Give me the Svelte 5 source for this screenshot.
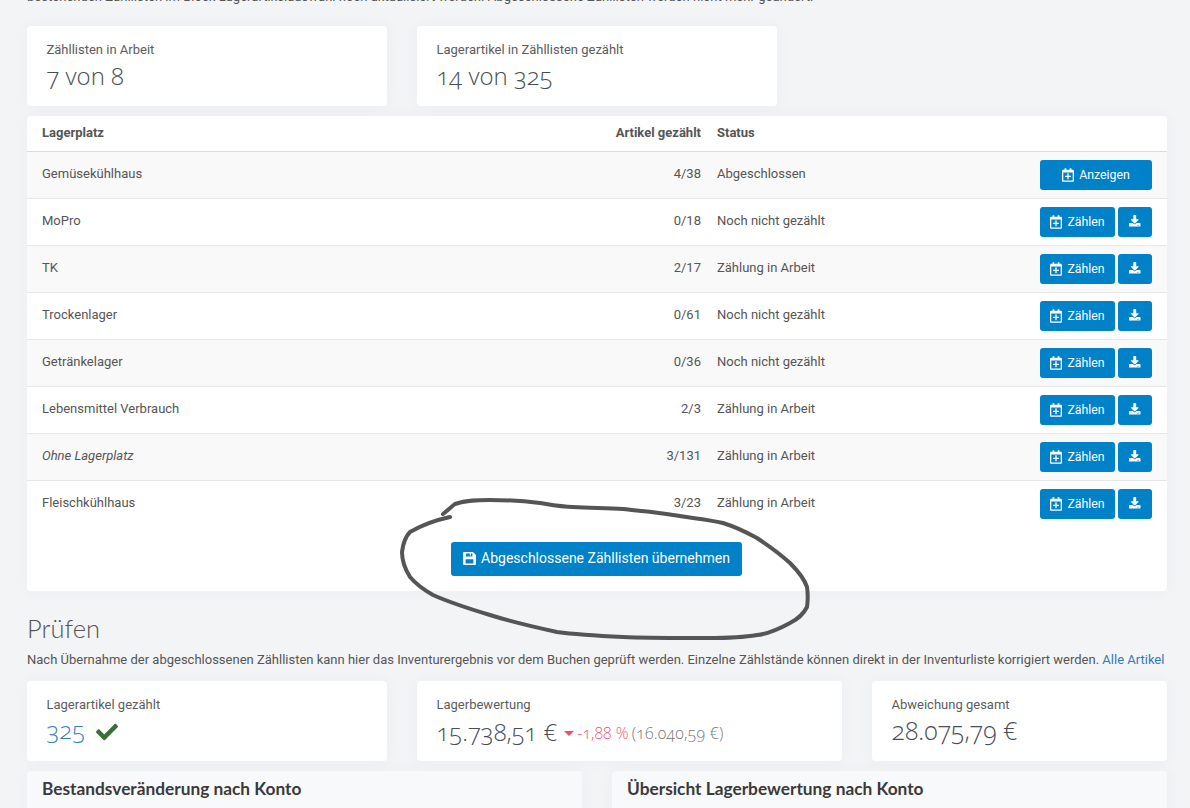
<script>
  const rows = [
    { name: 'Gemüsekühlhaus', count: '4/38', status: 'Abgeschlossen', done: true },
    { name: 'MoPro', count: '0/18', status: 'Noch nicht gezählt' },
    { name: 'TK', count: '2/17', status: 'Zählung in Arbeit' },
    { name: 'Trockenlager', count: '0/61', status: 'Noch nicht gezählt' },
    { name: 'Getränkelager', count: '0/36', status: 'Noch nicht gezählt' },
    { name: 'Lebensmittel Verbrauch', count: '2/3', status: 'Zählung in Arbeit' },
    { name: 'Ohne Lagerplatz', count: '3/131', status: 'Zählung in Arbeit', em: true },
    { name: 'Fleischkühlhaus', count: '3/23', status: 'Zählung in Arbeit' }
  ];
  const cal = 'M336 292v24c0 6.6-5.4 12-12 12h-76v76c0 6.6-5.4 12-12 12h-24c-6.6 0-12-5.4-12-12v-76h-76c-6.6 0-12-5.4-12-12v-24c0-6.6 5.4-12 12-12h76v-76c0-6.6 5.4-12 12-12h24c6.6 0 12 5.4 12 12v76h76c6.6 0 12 5.4 12 12zm112-180v352c0 26.5-21.5 48-48 48H48c-26.5 0-48-21.5-48-48V112c0-26.5 21.5-48 48-48h48V12c0-6.6 5.4-12 12-12h40c6.6 0 12 5.4 12 12v52h128V12c0-6.6 5.4-12 12-12h40c6.6 0 12 5.4 12 12v52h48c26.5 0 48 21.5 48 48zm-48 346V160H48v298c0 3.3 2.7 6 6 6h340c3.3 0 6-2.7 6-6z';
  const dl = 'M216 0h80c13.3 0 24 10.7 24 24v168h87.7c17.8 0 26.7 21.5 14.1 34.1L269.7 378.3c-7.5 7.5-19.8 7.5-27.3 0L90.1 226.1c-12.6-12.6-3.7-34.1 14.1-34.1H192V24c0-13.3 10.7-24 24-24zm296 376v112c0 13.3-10.7 24-24 24H24c-13.3 0-24-10.7-24-24V376c0-13.3 10.7-24 24-24h146.7l49 49c20.1 20.1 52.5 20.1 72.6 0l49-49H488c13.3 0 24 10.7 24 24zm-124 88c0-11-9-20-20-20s-20 9-20 20 9 20 20 20 20-9 20-20zm64 0c0-11-9-20-20-20s-20 9-20 20 9 20 20 20 20-9 20-20z';
  const save = 'M1 0H10L13 3V12a1 1 0 0 1-1 1H1a1 1 0 0 1-1-1V1a1 1 0 0 1 1-1z M3 1.4V4.6H9.4V1.4H8V3.6H6.8V1.4z M2.6 7.2V11.6H10.4V7.2z';
  const check = 'M173.898 439.404l-166.4-166.4c-9.997-9.997-9.997-26.206 0-36.204l36.203-36.204c9.997-9.998 26.207-9.998 36.204 0L192 312.69 432.095 72.596c9.997-9.997 26.207-9.997 36.204 0l36.203 36.204c9.997 9.997 9.997 26.206 0 36.204l-294.4 294.401c-9.998 9.997-26.207 9.997-36.204-.001z';
</script>

<div class="page">
  <p class="intro">bestehenden Zähllisten im Block Lagerartikelauswahl noch aktualisiert werden. Abgeschlossene Zähllisten werden nicht mehr geändert.</p>

  <div class="stats first">
    <div class="stat w360"><div class="label">Zähllisten in Arbeit</div><div class="value">7 von 8</div></div>
    <div class="stat w360"><div class="label">Lagerartikel in Zähllisten gezählt</div><div class="value">14 von 325</div></div>
  </div>

  <section class="card table-card">
    <div class="row head">
      <div class="c-name">Lagerplatz</div>
      <div class="c-count">Artikel gezählt</div>
      <div class="c-status">Status</div>
    </div>
    {#each rows as r, i}
      <div class="row" class:odd={i % 2 === 0}>
        <div class="c-name" class:em={r.em}>{r.name}</div>
        <div class="c-count">{r.count}</div>
        <div class="c-status">{r.status}</div>
        <div class="c-actions">
          {#if r.done}
            <button class="btn wide"><svg class="ic" viewBox="0 0 448 512"><path d={cal} /></svg>Anzeigen</button>
          {:else}
            <button class="btn count"><svg class="ic" viewBox="0 0 448 512"><path d={cal} /></svg>Zählen</button>
            <button class="btn dl"><svg class="ic dlic" viewBox="0 0 512 512"><path d={dl} /></svg></button>
          {/if}
        </div>
      </div>
    {/each}
    <div class="foot">
      <button class="btn big"><svg class="ic sv" viewBox="0 0 13 13"><path fill-rule="evenodd" d={save} /></svg><span class="bigtxt">Abgeschlossene Zähllisten übernehmen</span></button>
    </div>
  </section>

  <h2 class="title">Prüfen</h2>
  <p class="desc">Nach Übernahme der abgeschlossenen Zähllisten kann hier das Inventurergebnis vor dem Buchen geprüft werden. Einzelne Zählstände können direkt in der Inventurliste korrigiert werden. <span class="link">Alle Artikel</span></p>

  <div class="stats">
    <div class="stat w360">
      <div class="label">Lagerartikel gezählt</div>
      <div class="value blue">325<svg class="chk" viewBox="0 0 512 512"><path d={check} /></svg></div>
    </div>
    <div class="stat w425">
      <div class="label">Lagerbewertung</div>
      <div class="value">15.738,51 €<span class="caret"></span><small class="red">-1,88 %</small><small class="prev">(16.040,59 €)</small></div>
    </div>
    <div class="stat grow">
      <div class="label">Abweichung gesamt</div>
      <div class="value wide-val">28.075,79 €</div>
    </div>
  </div>

  <div class="panels">
    <div class="panel">Bestandsveränderung nach Konto</div>
    <div class="panel">Übersicht Lagerbewertung nach Konto</div>
  </div>

  <svg class="scribble" viewBox="0 0 1190 808" aria-hidden="true">
    <path d="M443 514 C447 511 451 507 455 504 C466 500 478 500 490 500 C508 500 524 501 540 503 C552 505 562 507 573 507 C590 508 606 508 623 509 C640 511 656 512 673 515 C690 518 707 519 723 523 C736 527 746 532 757 538 C769 546 780 554 790 563 C798 571 804 578 807 587 C808 594 808 600 807 607 C803 615 798 619 790 623 C779 629 769 634 757 635 C735 639 712 638 690 638 C668 638 645 638 623 637 C601 636 579 635 557 632 C534 627 512 622 490 615 C470 609 451 603 433 595 C424 590 416 584 410 577 C405 569 402 561 402 552 C403 544 405 537 410 532 C422 525 436 520 450 517" />
  </svg>
</div>

<style>
  :global(body) { margin: 0; background: #f3f4f6; overflow: hidden; }
  .page {
    position: relative; width: 1190px; height: 808px; overflow: hidden; box-sizing: border-box;
    padding: 0 23px 0 27px;
    font-family: Roboto, "Liberation Sans", sans-serif; font-size: 13px; color: #555;
  }
  .intro { margin: -11px 0 0; line-height: 15px; height: 15px; white-space: nowrap; letter-spacing: 0.03px; }
  .stats { display: flex; gap: 30px; }
  .stats.first { margin-top: 22px; }
  .stat {
    background: #fff; border-radius: 4px; height: 80px; box-sizing: border-box; padding: 16px 19.5px 0;
    box-shadow: 0 0 16px rgba(60, 70, 90, 0.04);
  }
  .w360 { width: 360px; }
  .w425 { width: 425px; }
  .grow { flex: 1; }
  .label { line-height: 15px; color: #5c5c5c; }
  .value {
    font-family: "Open Sans", Lato, sans-serif; font-weight: 300; font-size: 24px; line-height: 32px;
    font-variant-numeric: oldstyle-nums; font-feature-settings: "onum" 1;
    margin-top: 2px; color: #484e55; white-space: nowrap; display: flex; align-items: center;
  }
  .first .value { margin-top: 3px; }
  .wide-val { font-size: 25px; }
  .value.blue { color: #3a7fc0; }
  .value small { font-size: 16px; margin-top: 3px; white-space: pre; }
  .red { color: #ef5a6f; }
  .prev { color: #777; margin-left: 3px; letter-spacing: 0.2px; }
  .caret {
    width: 0; height: 0; border: 5px solid transparent; border-top: 5.5px solid #ee4e68; border-bottom: 0;
    margin: 3px 3px 0 7px;
  }
  .chk { width: 22px; height: 22px; fill: #3a7038; margin: 4px 0 0 11px; }
  .card { background: #fff; border-radius: 4px; box-shadow: 0 0 16px rgba(60, 70, 90, 0.04); }
  .table-card { margin-top: 10px; height: 475px; display: flex; flex-direction: column; }
  .row {
    display: grid; grid-template-columns: 427px 216px 1fr auto; align-items: center;
    height: 47px; box-sizing: border-box; padding: 0 15px; border-bottom: 1px solid #e6e7e9; column-gap: 16px;
  }
  .row > div { padding-bottom: 4px; }
  .row.odd { background: #f9f9f9; }
  .row:nth-child(9) { border-bottom-color: transparent; }
  .row.head { height: 36px; font-weight: 700; border-bottom: 1px solid #dcdddf; font-size: 13px; }
  .row.head > div { padding-bottom: 2px; }
  .c-name { grid-column: 1; }
  .c-count { text-align: right; margin-left: 0; }
  .row > .c-actions { display: flex; gap: 3px; padding: 0; }
  .em { font-style: italic; }
  .btn {
    display: inline-flex; align-items: center; justify-content: center; border: 0; border-radius: 3px;
    background: #0081c8; color: #fff; font: 400 12.3px Roboto, sans-serif; height: 30px; padding: 0;
  }
  .wide { width: 112px; }
  .count { width: 75px; }
  .dl { width: 34px; }
  .ic { width: 12px; height: 14px; fill: #fff; margin-right: 5px; flex: none; }
  .dlic { width: 11.5px; height: 11.5px; margin: -2px 0 0; }
  .foot { flex: 1; display: flex; justify-content: center; padding-top: 14px; }
  .big { width: 291px; height: 34px; font: 400 14px Roboto, sans-serif; margin-right: 1px; }
  .bigtxt { margin-top: -2px; }
  .sv { width: 13px; height: 13px; margin: -2px 5px 0 0; }
  .title {
    margin: 22px 0 0; font-family: Lato, "Open Sans", sans-serif; font-weight: 300; font-size: 25.5px; line-height: 30px; color: #555;
  }
  .desc { margin: 9px 0 0; line-height: 16px; color: #555; white-space: nowrap; }
  .link { color: #337ab7; }
  .desc + .stats { margin-top: 13px; }
  .panels { display: flex; gap: 30px; margin-top: 10px; }
  .panel {
    background: #f8f9fb; border-radius: 4px 4px 0 0; height: 60px; box-sizing: border-box; padding: 8px 15px;
    font-family: Lato, "Open Sans", sans-serif; font-weight: 700; font-size: 17.3px; line-height: 20px; color: #3a3a3a;
    box-shadow: 0 0 16px rgba(60, 70, 90, 0.04);
  }
  .panel:first-child { width: 555px; }
  .panel:last-child { flex: 1; }
  .scribble { position: absolute; left: 0; top: 0; width: 1190px; height: 808px; pointer-events: none; }
  .scribble path { fill: none; stroke: #555; stroke-width: 4; stroke-linecap: round; stroke-linejoin: round; }
</style>
